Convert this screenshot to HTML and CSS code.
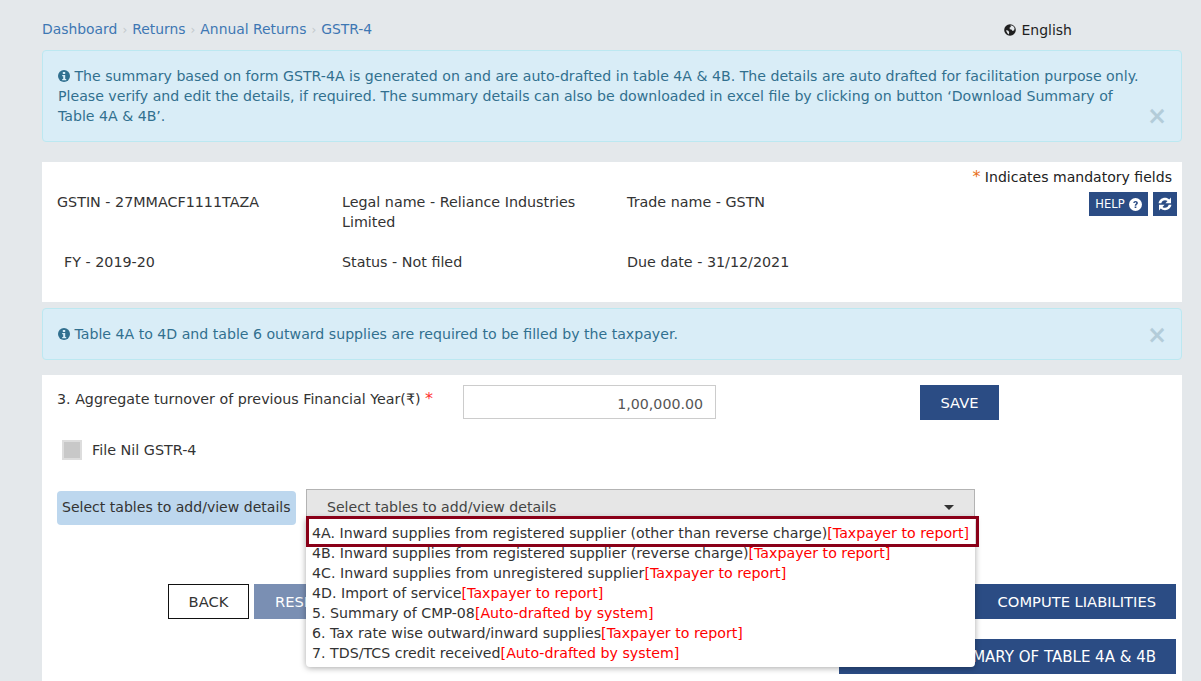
FILE: index.html
```html
<!DOCTYPE html>
<html lang="en">
<head>
<meta charset="utf-8">
<title>GSTR-4</title>
<link rel="stylesheet" href="styles.css">
</head>
<body>
<div class="page">
  <div class="topbar">
    <nav class="crumbs">
      <a>Dashboard</a><span class="sep">›</span><a>Returns</a><span class="sep">›</span><a>Annual Returns</a><span class="sep">›</span><a>GSTR-4</a>
    </nav>
    <div class="lang">
      <svg class="globe" viewBox="0 0 12 12"><circle cx="6" cy="6" r="5.8" fill="#1f1f1f"/><path d="M6.5 1.2l2.6.8 1.5 2-.4 2.2-1.6.8-1.2-1.4-1.6-.4-.2-1.6 1.2-.6zM2 6.2l2 .4 1.2 1.4-.4 2.4-1-.6-1.2-2z" fill="#e4e8eb"/></svg>
      <span>English</span>
    </div>
  </div>

  <div class="alert alert-big">
    <p><svg class="info" viewBox="0 0 12 12"><circle cx="6" cy="6" r="6" fill="#31708f"/><rect x="4.8" y="2" width="2.4" height="2" fill="#d9edf7"/><path d="M4.2 5h3v4h1v1.2H4.2V9h1V6.2h-1z" fill="#d9edf7"/></svg> The summary based on form GSTR-4A is generated on and are auto-drafted in table 4A &amp; 4B. The details are auto drafted for facilitation purpose only. Please verify and edit the details, if required. The summary details can also be downloaded in excel file by clicking on button ‘Download Summary of Table 4A &amp; 4B’.</p>
    <span class="close close-big">×</span>
  </div>

  <section class="panel info-panel">
    <div class="mandatory"><span class="star-o">*</span> Indicates mandatory fields</div>
    <div class="info-body">
      <div class="info-grid">
        <div class="cell">GSTIN - 27MMACF1111TAZA</div>
        <div class="cell">Legal name - Reliance Industries Limited</div>
        <div class="cell">Trade name - GSTN</div>
        <div class="cell cell-fy">FY - 2019-20</div>
        <div class="cell">Status - Not filed</div>
        <div class="cell">Due date - 31/12/2021</div>
      </div>
      <div class="tools">
        <button class="tool tool-help">HELP
          <svg class="tool-q" viewBox="0 0 12 12"><circle cx="6" cy="6" r="6" fill="#fff"/><path d="M3.9 4.6C4 3.4 4.9 2.7 6.1 2.7c1.2 0 2.1.7 2.1 1.8 0 1.5-1.5 1.5-1.5 2.6H5.3c0-1.7 1.4-1.8 1.4-2.600 0-.4-.3-.6-.7-.6-.4 0-.7.3-.8.8zM5.200 7.800h1.600v1.500H5.200z" fill="#2b4c84"/></svg>
        </button>
        <button class="tool tool-refresh">
          <svg viewBox="0 0 14 14" class="tool-r"><path d="M.6 6.200C1.100 3 3.800.8 7 .8c1.600 0 3.100.6 4.200 1.600L13 .6v5.600H7.400l2.100-2.100C8.900 3.500 8 3.200 7 3.200 5.200 3.200 3.800 4.400 3.300 6.200zM13.400 7.800C12.900 11 10.200 13.200 7 13.200c-1.600 0-3.100-.6-4.200-1.600L1 13.400V7.800h5.600L4.500 9.900c.6.6 1.500.9 2.500.9 1.800 0 3.200-1.200 3.700-3z" fill="#fff"/></svg>
        </button>
      </div>
    </div>
  </section>

  <div class="alert alert-small">
    <p><svg class="info" viewBox="0 0 12 12"><circle cx="6" cy="6" r="6" fill="#31708f"/><rect x="4.8" y="2" width="2.4" height="2" fill="#d9edf7"/><path d="M4.2 5h3v4h1v1.2H4.2V9h1V6.2h-1z" fill="#d9edf7"/></svg> Table 4A to 4D and table 6 outward supplies are required to be filled by the taxpayer.</p>
    <span class="close close-small">×</span>
  </div>

  <section class="panel form-panel">
    <div class="turnover">
      <label class="turnover-label">3. Aggregate turnover of previous Financial Year(₹) <span class="star-r">*</span></label>
      <div class="amount">1,00,000.00</div>
      <button class="btn btn-save">SAVE</button>
    </div>
    <div class="nil"><span class="check"></span><span>File Nil GSTR-4</span></div>
    <div class="select-row">
      <div class="select-label">Select tables to add/view details</div>
      <div class="select-wrap">
        <div class="select-box"><span>Select tables to add/view details</span><i class="caret"></i></div>
        <ul class="menu">
          <li class="hl">4A. Inward supplies from registered supplier (other than reverse charge)<em>[Taxpayer to report]</em></li>
          <li>4B. Inward supplies from registered supplier (reverse charge)<em>[Taxpayer to report]</em></li>
          <li>4C. Inward supplies from unregistered supplier<em>[Taxpayer to report]</em></li>
          <li>4D. Import of service<em>[Taxpayer to report]</em></li>
          <li>5. Summary of CMP-08<em>[Auto-drafted by system]</em></li>
          <li>6. Tax rate wise outward/inward supplies<em>[Taxpayer to report]</em></li>
          <li>7. TDS/TCS credit received<em>[Auto-drafted by system]</em></li>
        </ul>
      </div>
    </div>
    <div class="actions">
      <button class="btn btn-back">BACK</button>
      <button class="btn btn-reset">RESET</button>
      <button class="btn btn-compute">COMPUTE LIABILITIES</button>
    </div>
    <div class="actions actions-2">
      <button class="btn btn-download">DOWNLOAD SUMMARY OF TABLE 4A &amp; 4B</button>
    </div>
  </section>
</div>
</body>
</html>
```
FILE: styles.css
```css
*, *::after { box-sizing: border-box; }
html, body { margin: 0; height: 681px; overflow: hidden; }
body {
  background: #e4e8eb;
  font-family: "DejaVu Sans", Verdana, sans-serif;
  font-size: 14.2px;
  line-height: 20px;
  color: #333;
}
.page { width: 1140px; margin-left: 42px; }
.topbar { display: flex; justify-content: space-between; height: 50px; padding-top: 19px; }
.crumbs { color: #3e77b3; font-size: 13.9px; }
.crumbs .sep { color: #c3c8cc; margin: 0 5px; font-size: 12px; }
.lang { display: flex; align-items: center; gap: 5px; height: 22px; color: #1f1f1f; margin-right: 110px; font-size: 14px; }
.globe { width: 12px; height: 12px; }
.alert {
  position: relative;
  background: #d9edf7;
  border: 1px solid #bce8f1;
  border-radius: 4px;
  color: #31708f;
  font-size: 14.13px;
}
.alert p { margin: 0; }
.alert-big { height: 92px; padding: 15px 35px 15px 15px; margin-bottom: 20px; }
.alert-small { height: 52px; padding: 15px 35px 15px 15px; margin-bottom: 15px; margin-top: 6px; }
.info { width: 12px; height: 12px; vertical-align: -1px; }
.close { position: absolute; right: 14px; font-size: 24px; font-weight: 700; color: #b3ccd9; line-height: 20px; }
.close-big { top: 55px; }
.close-small { top: 16px; }
.panel { background: #fff; }
.info-panel { height: 140px; padding: 5px 5px 0 15px; }
.mandatory { text-align: right; color: #222; padding-right: 5px; font-size: 14.05px; }
.star-o { color: #e8701a; font-size: 16px; }
.star-r { color: #f33; font-size: 16px; }
.info-body { display: flex; justify-content: space-between; }
.info-grid { display: grid; grid-template-columns: 285px 285px 285px; grid-auto-rows: auto; row-gap: 20px; padding-top: 5px; color: #333; font-size: 14.3px; }
.cell { padding-right: 30px; }
.cell-fy { padding-left: 7px; }
.tools { display: flex; gap: 5px; padding-top: 5px; }
.tool { height: 24px; background: #2b4c84; border: 0; color: #fff; padding: 0; display: flex; align-items: center; justify-content: center; font: inherit; font-size: 11.5px; }
.tool-help { width: 59px; gap: 4px; }
.tool-refresh { width: 24px; }
.tool-q { width: 13px; height: 13px; }
.tool-r { width: 14px; height: 14px; }
.form-panel { height: 306px; padding: 10px 6px 0 15px; }
.turnover { display: flex; align-items: flex-start; height: 35px; }
.turnover-label { width: 406px; padding-top: 4px; color: #333; white-space: nowrap; font-size: 14.25px; }
.amount { width: 253px; height: 34px; border: 1px solid #ccc; text-align: right; padding: 8px 12px 0 0; color: #555; }
.btn { font: inherit; font-size: 14.7px; height: 35px; border: 0; padding: 0; color: #fff; background: #2b4c84; }
.btn-save { width: 79px; margin-left: 204px; }
.nil { display: flex; align-items: center; gap: 10px; margin-top: 20px; padding-left: 5px; height: 20px; font-size: 14.35px; }
.check { width: 20px; height: 20px; background: #c8c8c8; border: 2px solid #ddd; }
.select-row { display: flex; margin-top: 29px; height: 34px; align-items: flex-start; }
.select-label { width: 239px; height: 34px; background: #bdd7ee; border-radius: 4px; padding: 6px 0 0 5px; white-space: nowrap; color: #333; margin-top: 2px; font-size: 14.05px; }
.select-wrap { position: relative; margin-left: 10px; width: 669px; }
.select-box { height: 32px; background: #e6e6e6; border: 1px solid #b3b3b3; padding: 7px 20px 0 20px; display: flex; justify-content: space-between; color: #444; font-size: 14.1px; }
.caret { width: 0; height: 0; border: 5px solid transparent; border-top-color: #333; border-bottom-width: 0; margin-top: 8px; }
.menu {
  position: absolute; left: 0; top: 29px; width: 669px; height: 149px;
  margin: 0; padding: 5px 0 0 0; list-style: none; background: #fff;
  border-radius: 0 0 4px 4px;
  box-shadow: 0 1px 6px rgba(0,0,0,.35);
  z-index: 2;
}
.menu li { height: 20px; padding-left: 6px; white-space: nowrap; color: #333; }
.menu em { font-style: normal; color: #f00; }
.menu .hl { position: relative; }
.menu .hl::after { content: ""; position: absolute; left: 0; top: -7px; width: 673px; height: 31px; border: 3px solid #8a0018; }
.actions { display: flex; margin-top: 61px; padding-left: 111px; }
.btn-back { width: 81px; background: #fff; color: #333; border: 1px solid #111; }
.btn-reset { width: 100px; margin-left: 5px; background: #7a8fb3; text-align: left; padding-left: 21px; }
.btn-compute { width: 280px; margin-left: auto; text-align: right; padding-right: 20px; }
.actions-2 { margin-top: 20px; justify-content: flex-end; }
.btn-download { width: 337px; text-align: right; padding-right: 20px; font-size: 15px; }
```
